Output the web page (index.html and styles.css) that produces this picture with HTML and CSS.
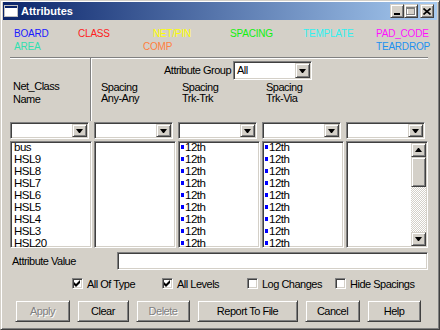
FILE: index.html
```html
<!DOCTYPE html>
<html lang="en">
<head>
    <meta charset="UTF-8">
    <title>Attributes</title>
    <link rel="stylesheet" href="styles.css">
</head>
<body>
    <div class="window">
        <div class="titlebar">
            <svg class="app-icon" width="14" height="12" viewBox="0 0 14 12">
                <rect x="0" y="0" width="14" height="12" fill="#fff"/>
                <rect x="1" y="1" width="12" height="2" fill="#0a246a"/>
                <rect x="0.5" y="0.5" width="13" height="11" fill="none" stroke="#c0c0c0"/>
            </svg>
            <span class="title">Attributes</span>
            <div class="caption">
                <span class="cap-btn raised">
                    <svg width="8" height="8" viewBox="0 0 8 8"><rect x="1" y="6" width="6" height="2" fill="#000"/></svg>
                </span>
                <span class="cap-btn raised">
                    <svg width="10" height="9" viewBox="0 0 10 9">
                        <rect x="1.5" y="1.5" width="8" height="7" fill="none" stroke="#fff"/>
                        <rect x="0.5" y="0.5" width="8" height="7" fill="none" stroke="#808080"/>
                        <rect x="0" y="0" width="9" height="2" fill="#808080"/>
                    </svg>
                </span>
                <span class="cap-btn raised close">
                    <svg width="8" height="7" viewBox="0 0 8 7"><path d="M0.5 0.5 L7.5 6.5 M7.5 0.5 L0.5 6.5" stroke="#000" stroke-width="1.6"/></svg>
                </span>
            </div>
        </div>

        <div class="legend">
            <span class="c-board">BOARD</span>
            <span class="c-class">CLASS</span>
            <span class="c-netpin">NET/PIN</span>
            <span class="c-spacing">SPACING</span>
            <span class="c-template">TEMPLATE</span>
            <span class="c-padcode">PAD_CODE</span>
            <span class="c-area">AREA</span>
            <span></span>
            <span class="c-comp">COMP</span>
            <span></span>
            <span></span>
            <span class="c-teardrop">TEARDROP</span>
        </div>

        <div class="content">
            <div class="header">
                <div class="name-head">Net_Class<br>Name</div>
                <div class="group-row">
                    <span class="group-label">Attribute Group</span>
                    <div class="combo group-combo">
                        <span class="combo-text">All</span>
                        <span class="combo-btn raised"><i class="arrow-down"></i></span>
                    </div>
                </div>
                <div class="col-label first">Spacing<br>Any-Any</div>
                <div class="col-label">Spacing<br>Trk-Trk</div>
                <div class="col-label">Spacing<br>Trk-Via</div>
            </div>

            <div class="filters">
                <div class="combo"><span class="combo-btn raised"><i class="arrow-down"></i></span></div>
                <div class="combo"><span class="combo-btn raised"><i class="arrow-down"></i></span></div>
                <div class="combo"><span class="combo-btn raised"><i class="arrow-down"></i></span></div>
                <div class="combo"><span class="combo-btn raised"><i class="arrow-down"></i></span></div>
                <div class="combo"><span class="combo-btn raised"><i class="arrow-down"></i></span></div>
            </div>

            <div class="lists">
                <div class="list">
                    <ul>
                        <li>bus</li>
                        <li>HSL9</li>
                        <li>HSL8</li>
                        <li>HSL7</li>
                        <li>HSL6</li>
                        <li>HSL5</li>
                        <li>HSL4</li>
                        <li>HSL3</li>
                        <li>HSL20</li>
                    </ul>
                </div>
                <div class="list"></div>
                <div class="list marked">
                    <ul>
                        <li>12th</li>
                        <li>12th</li>
                        <li>12th</li>
                        <li>12th</li>
                        <li>12th</li>
                        <li>12th</li>
                        <li>12th</li>
                        <li>12th</li>
                        <li>12th</li>
                    </ul>
                </div>
                <div class="list marked">
                    <ul>
                        <li>12th</li>
                        <li>12th</li>
                        <li>12th</li>
                        <li>12th</li>
                        <li>12th</li>
                        <li>12th</li>
                        <li>12th</li>
                        <li>12th</li>
                        <li>12th</li>
                    </ul>
                </div>
                <div class="list with-scroll">
                    <div class="scrollbar">
                        <span class="scroll-btn raised"><i class="arrow-up"></i></span>
                        <span class="scroll-thumb raised"></span>
                        <span class="scroll-track"></span>
                        <span class="scroll-btn raised"><i class="arrow-down"></i></span>
                    </div>
                </div>
            </div>

            <div class="value-row">
                <span class="value-label">Attribute Value</span>
                <div class="value-input"></div>
            </div>

            <div class="checks">
                <label class="check"><span class="box"><svg width="7" height="7" viewBox="0 0 7 7"><path d="M0 2 L2 4 L6 0 L6 3 L2 7 L0 5 Z" fill="#000"/></svg></span>All Of Type</label>
                <label class="check"><span class="box"><svg width="7" height="7" viewBox="0 0 7 7"><path d="M0 2 L2 4 L6 0 L6 3 L2 7 L0 5 Z" fill="#000"/></svg></span>All Levels</label>
                <label class="check"><span class="box"></span>Log Changes</label>
                <label class="check"><span class="box"></span>Hide Spacings</label>
            </div>

            <div class="buttons">
                <button class="btn raised disabled w-apply">Apply</button>
                <button class="btn raised w-clear">Clear</button>
                <button class="btn raised disabled w-delete">Delete</button>
                <button class="btn raised w-report">Report To File</button>
                <button class="btn raised w-cancel">Cancel</button>
                <button class="btn raised w-help">Help</button>
            </div>
        </div>
    </div>
</body>
</html>
```

FILE: styles.css
```css
body {
    margin: 0;
    font-family: "Liberation Sans", Arial, sans-serif;
    font-size: 11px;
    letter-spacing: -0.5px;
    color: #000;
    background: #d4d0c8;
}

.window {
    width: 440px;
    height: 330px;
    box-sizing: border-box;
    background: #d4d0c8;
    border: 1px solid;
    border-color: #d4d0c8 #404040 #404040 #d4d0c8;
    box-shadow: inset 1px 1px #fff, inset -1px -1px #808080;
    padding: 1px 2px 2px 2px;
}

/* shared 3d looks */
.raised {
    box-sizing: border-box;
    background: #d4d0c8;
    border: 1px solid;
    border-color: #d4d0c8 #404040 #404040 #d4d0c8;
    box-shadow: inset 1px 1px #fff, inset -1px -1px #808080;
}

.sunken {
    box-sizing: border-box;
    background: #fff;
    border: 1px solid;
    border-color: #808080 #fff #fff #808080;
    box-shadow: inset 1px 1px #404040, inset -1px -1px #d4d0c8;
}

.arrow-down,
.arrow-up {
    display: block;
    width: 1px;
    height: 0;
    border-left: 3px solid transparent;
    border-right: 3px solid transparent;
}

.arrow-down {
    border-top: 4px solid #000;
}

.arrow-up {
    border-bottom: 4px solid #000;
}

/* title bar */
.titlebar {
    height: 18px;
    display: flex;
    align-items: center;
    padding: 0 3px 0 1px;
    background: linear-gradient(to right, #0a246a, #a6caf0);
}

.app-icon {
    margin-right: 3px;
}

.title {
    color: #fff;
    font-weight: bold;
    letter-spacing: 0;
}

.caption {
    margin-left: auto;
    display: flex;
}

.cap-btn {
    width: 14px;
    height: 14px;
    display: flex;
    align-items: center;
    justify-content: center;
}

.cap-btn.close {
    margin-left: 2px;
}

/* colour legend */
.legend {
    display: grid;
    grid-template-columns: 64px 75px 77px 73px 73px 1fr;
    padding: 7px 0 0 11px;
    line-height: 13px;
    font-size: 10px;
    letter-spacing: -0.2px;
}

.c-board { color: #1a1aff; }
.c-class { color: #ff2020; }
.c-netpin { color: #ffff00; }
.c-spacing { color: #10f010; }
.c-template { color: #30f0f0; }
.c-padcode { color: #ff10ff; }
.c-area { color: #30e0b0; }
.c-comp { color: #ff8040; margin-left: -10px; }
.c-teardrop { color: #2090f0; }

.content {
    padding: 0 9px 0 7px;
}

/* column headers */
.header {
    margin-top: 4px;
    height: 64px;
    box-sizing: border-box;
    border-top: 1px solid #808080;
    box-shadow: inset 0 1px #fff;
    display: grid;
    grid-template-columns: repeat(5, 82px);
    grid-template-rows: 22px 1fr;
    column-gap: 2px;
}

.name-head {
    grid-row: 1 / 3;
    grid-column: 1;
    margin-right: 1px;
    border-right: 1px solid #808080;
    box-shadow: 1px 0 #fff;
    padding: 22px 0 0 3px;
    line-height: 13px;
}

.group-row {
    grid-row: 1;
    grid-column: 2 / 6;
    display: flex;
    align-items: flex-start;
    padding: 3px 0 0 70px;
}

.group-label {
    width: 69px;
    line-height: 19px;
}

.col-label {
    grid-row: 2;
    padding: 2px 0 0 4px;
    line-height: 11px;
}

.col-label.first {
    padding-left: 7px;
}

/* combo boxes */
.combo {
    box-sizing: border-box;
    height: 17px;
    background: #fff;
    border: 1px solid;
    border-color: #808080 #fff #fff #808080;
    box-shadow: inset 1px 1px #404040, inset -1px -1px #d4d0c8;
    padding: 1px;
    display: flex;
    justify-content: flex-end;
}

.combo-text {
    flex: 1;
    padding-left: 2px;
    line-height: 15px;
}

.combo-btn {
    width: 15px;
    height: 100%;
    display: flex;
    align-items: center;
    justify-content: center;
}

.group-combo {
    width: 79px;
    height: 19px;
}

.filters {
    margin-top: 1px;
    display: grid;
    grid-template-columns: repeat(5, 82px);
    column-gap: 2px;
}

.filters .combo {
    margin-right: 3px;
}

/* lists */
.lists {
    margin-top: 2px;
    height: 107px;
    display: grid;
    grid-template-columns: repeat(5, 82px);
    column-gap: 2px;
}

.list {
    box-sizing: border-box;
    background: #fff;
    border: 1px solid;
    border-color: #808080 #fff #fff #808080;
    box-shadow: inset 1px 1px #404040, inset -1px -1px #d4d0c8;
    padding: 1px 1px 1px 3px;
    overflow: hidden;
    font-size: 11.5px;
}

.list ul {
    list-style: none;
    margin: -2px 0 0 0;
    padding: 0;
    line-height: 12px;
}

.marked {
    padding-left: 2px;
}

.marked li::before {
    content: "";
    display: inline-block;
    width: 3px;
    height: 4px;
    margin-right: 1px;
    background: #0000ff;
    vertical-align: 2px;
}

.with-scroll {
    display: flex;
    justify-content: flex-end;
    padding: 1px;
}

.scrollbar {
    width: 15px;
    display: flex;
    flex-direction: column;
}

.scroll-btn {
    height: 14px;
    display: flex;
    align-items: center;
    justify-content: center;
    flex: none;
}

.scroll-thumb {
    height: 30px;
    flex: none;
}

.scroll-track {
    flex: 1;
    background: repeating-conic-gradient(#d4d0c8 0 25%, #fff 0 50%) 0 0 / 2px 2px;
}

/* attribute value */
.value-row {
    margin-top: 4px;
    display: flex;
    align-items: center;
}

.value-label {
    width: 105px;
    padding-left: 2px;
}

.value-input {
    flex: 1;
    height: 18px;
    box-sizing: border-box;
    background: #fff;
    border: 1px solid;
    border-color: #808080 #fff #fff #808080;
    box-shadow: inset 1px 1px #404040, inset -1px -1px #d4d0c8;
}

/* check boxes */
.checks {
    margin-top: 7px;
    height: 13px;
    padding-left: 62px;
    display: grid;
    grid-template-columns: 90px 85px 88px auto;
    align-items: center;
}

.check {
    display: flex;
    align-items: center;
    gap: 4px;
}

.box {
    width: 11px;
    height: 11px;
    box-sizing: border-box;
    background: #fff;
    border: 1px solid;
    border-color: #808080 #fff #fff #808080;
    box-shadow: inset 1px 1px #404040, inset -1px -1px #d4d0c8;
    display: flex;
    align-items: center;
    justify-content: center;
}

/* buttons */
.buttons {
    margin-top: 10px;
    padding-left: 5px;
    display: flex;
    gap: 7px;
}

.btn {
    height: 22px;
    padding: 0;
    font-family: inherit;
    font-size: 11px;
    letter-spacing: -0.5px;
    color: #000;
}

.btn.disabled {
    color: #808080;
    text-shadow: 1px 1px 0 #fff;
}

.w-apply { width: 55px; }
.w-clear { width: 52px; }
.w-delete { width: 54px; }
.w-report { width: 101px; }
.w-cancel { width: 55px; }
.w-help { width: 54px; }
```
